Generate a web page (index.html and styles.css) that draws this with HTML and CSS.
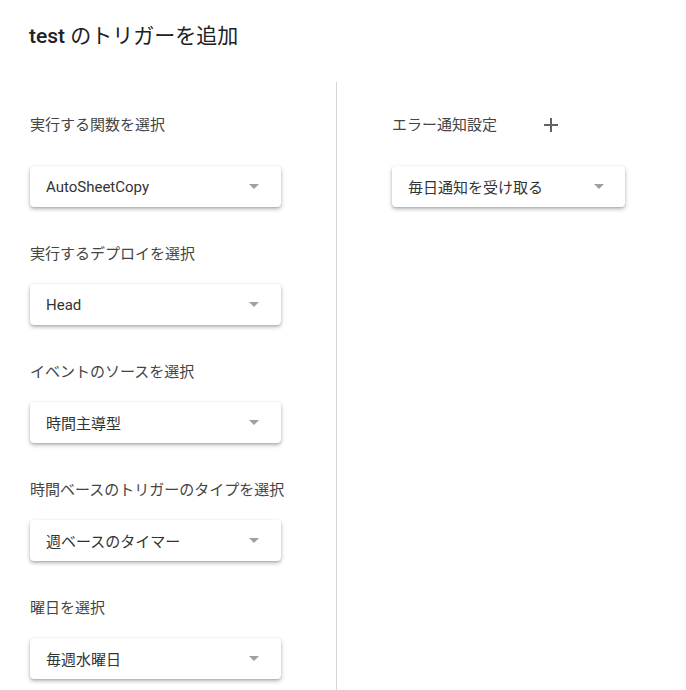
FILE: index.html
```html
<!DOCTYPE html>
<html lang="ja">
<head>
<meta charset="utf-8">
<title>test のトリガーを追加</title>
<link rel="stylesheet" href="styles.css">
</head>
<body>
<div class="page">
  <h1 class="title"><b>test</b> のトリガーを追加</h1>
  <div class="columns">
    <div class="col col-left">
      <div class="field">
        <div class="head">実行する関数を選択</div>
        <div class="select"><span>AutoSheetCopy</span><i class="caret"></i></div>
      </div>
      <div class="field">
        <div class="label">実行するデプロイを選択</div>
        <div class="select"><span>Head</span><i class="caret"></i></div>
      </div>
      <div class="field">
        <div class="label">イベントのソースを選択</div>
        <div class="select"><span>時間主導型</span><i class="caret"></i></div>
      </div>
      <div class="field">
        <div class="label">時間ベースのトリガーのタイプを選択</div>
        <div class="select"><span>週ベースのタイマー</span><i class="caret"></i></div>
      </div>
      <div class="field">
        <div class="label">曜日を選択</div>
        <div class="select"><span>毎週水曜日</span><i class="caret"></i></div>
      </div>
    </div>
    <div class="col col-right">
      <div class="field">
        <div class="head">
          <span>エラー通知設定</span>
          <button class="add" type="button" aria-label="追加">
            <svg width="14" height="14" viewBox="0 0 14 14"><path d="M7 0v14M0 7h14" stroke="#5f6368" stroke-width="2" fill="none"/></svg>
          </button>
        </div>
        <div class="select select-narrow"><span>毎日通知を受け取る</span><i class="caret"></i></div>
      </div>
    </div>
  </div>
</div>
</body>
</html>
```
FILE: styles.css
```css
* { box-sizing: border-box; }
html, body { margin: 0; padding: 0; background: #fff; }
body {
  font-family: Roboto, "Noto Sans CJK JP", sans-serif;
  color: #3c4043;
}
.page { padding-top: 22px; }
.title {
  margin: 0 0 32px 0;
  padding-left: 29px;
  font-size: 21px;
  line-height: 28px;
  font-weight: 400;
  color: #202124;
}
.title b { font-weight: 500; }
.columns { display: flex; align-items: stretch; }
.col { padding-top: 22px; }
.col-left {
  width: 337px;
  padding-left: 30px;
  border-right: 1px solid #d4d4dc;
}
.col-right { padding-left: 55px; }
.field { margin-bottom: 37px; }
.head {
  height: 42px;
  padding-bottom: 4px;
  display: flex;
  align-items: center;
  font-size: 15px;
  color: #444;
  margin-bottom: 20px;
}
.label {
  height: 20px;
  line-height: 20px;
  font-size: 15px;
  color: #444;
  margin-bottom: 20px;
}
.select {
  width: 251px;
  height: 41px;
  display: flex;
  align-items: center;
  justify-content: space-between;
  padding: 0 22px 0 16px;
  background: #fff;
  border-radius: 4px;
  box-shadow: 0 2px 4px rgba(0,0,0,0.28), 0 1px 2px rgba(0,0,0,0.12);
  font-size: 15px;
  color: #333;
}
.select-narrow { width: 233px; padding-right: 21px; }
.caret {
  width: 0;
  height: 0;
  border-left: 5.5px solid transparent;
  border-right: 5.5px solid transparent;
  border-top: 5px solid #a0a0a0;
}
.add {
  width: 32px;
  height: 32px;
  margin-left: 38px;
  margin-top: 4px;
  padding: 0;
  border: 0;
  background: transparent;
  display: flex;
  align-items: center;
  justify-content: center;
}
```
